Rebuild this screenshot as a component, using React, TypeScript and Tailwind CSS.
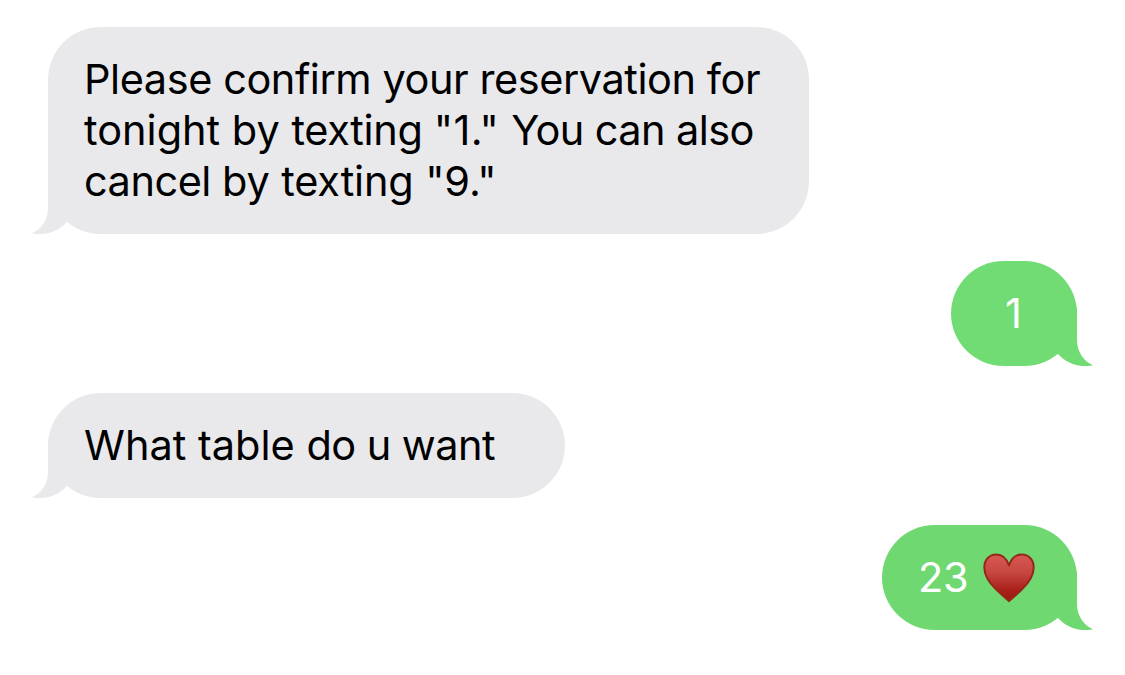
import type { ReactNode } from "react";

type Message = {
  id: number;
  from: "them" | "me";
  color: string;
  width: string;
  body: ReactNode;
};

function Heart() {
  return (
    <svg viewBox="0 0 52 50" className="w-[52px] h-[50px] shrink-0">
      <defs>
        <linearGradient id="heart-fill" x1="0" y1="0" x2="0" y2="1">
          <stop offset="0" stopColor="#d95a55" />
          <stop offset="0.4" stopColor="#c64640" />
          <stop offset="0.75" stopColor="#a9211a" />
          <stop offset="1" stopColor="#981a12" />
        </linearGradient>
      </defs>
      <path
        d="M26 48.2C23.5 45.4 18.6 42 13 36.4C6 29.4 1.3 22.5 1.3 14.4C1.3 6.8 6.6 1.4 13.2 1.4C19.4 1.4 23.8 5.6 26 12.4C28.2 5.6 32.6 1.4 38.8 1.4C45.4 1.4 50.7 6.8 50.7 14.4C50.7 22.5 46 29.4 39 36.4C33.4 42 28.5 45.4 26 48.2Z"
        fill="url(#heart-fill)"
        stroke="#96281a"
        strokeWidth="2"
        strokeLinejoin="round"
      />
    </svg>
  );
}

const messages: Message[] = [
  {
    id: 1,
    from: "them",
    color: "bg-[#e9e9eb] text-[#e9e9eb]",
    width: "w-[761px]",
    body: (
      <div className="text-black">
        <p className="tracking-[-0.44px]">Please confirm your reservation for</p>
        <p>
          tonight by <span className="tracking-[-0.35px]">texting </span>
          <span className="tracking-[0.3px]">"1." </span>
          <span className="tracking-[-0.6px]">You can also</span>
        </p>
        <p className="tracking-[-0.15px]">
          <span className="tracking-[-0.5px]">cancel </span>by texting "9."
        </p>
      </div>
    ),
  },
  {
    id: 2,
    from: "me",
    color: "bg-[#72dc74] text-[#72dc74]",
    width: "w-[126px]",
    body: <p className="text-white w-full text-center pl-1">1</p>,
  },
  {
    id: 3,
    from: "them",
    color: "bg-[#e9e9eb] text-[#e9e9eb]",
    width: "w-[517px]",
    body: (
      <p className="text-black">
        What table <span className="tracking-[-0.55px]">do u want</span>
      </p>
    ),
  },
  {
    id: 4,
    from: "me",
    color: "bg-[#6fd871] text-[#6fd871]",
    width: "w-[195px]",
    body: (
      <div className="flex w-full items-center justify-between text-white pr-px">
        <span className="tracking-[-0.3px]">23</span>
        <Heart />
      </div>
    ),
  },
];

function Bubble({ message }: { message: Message }) {
  const mine = message.from === "me";
  return (
    <div
      className={`relative flex py-[27px] rounded-[52.5px] ${message.color} ${message.width} ${
        mine ? "self-end pl-9 pr-[41px]" : "self-start pl-9"
      }`}
    >
      {/* tail uses currentColor so it follows the bubble */}
      <svg
        viewBox="0 0 36 60"
        className={`absolute bottom-0 w-9 h-[60px] ${
          mine ? "-right-4 -scale-x-100" : "-left-4"
        }`}
      >
        <path
          d="M16 0V34C16 46 9 55.5 0 59.2C14 62.2 26 57.5 35 48Z"
          fill="currentColor"
        />
      </svg>
      {message.body}
    </div>
  );
}

export default function App() {
  return (
    <main className="w-[1125px] h-[675px] overflow-hidden bg-white pt-[27px] pl-12 pr-12 flex flex-col gap-[27px] font-['Inter',sans-serif] text-[41.5px] leading-[51px] whitespace-nowrap">
      {messages.map((message) => (
        <Bubble key={message.id} message={message} />
      ))}
    </main>
  );
}
